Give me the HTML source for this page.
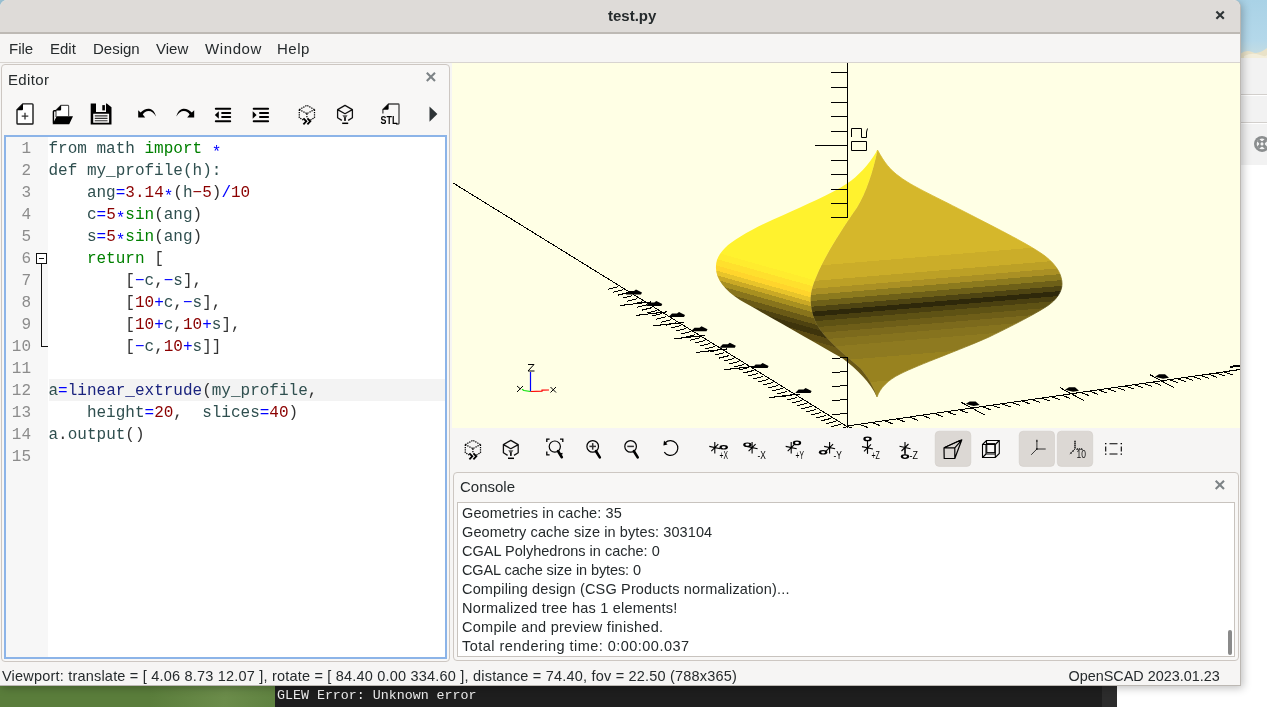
<!DOCTYPE html>
<html><head><meta charset="utf-8">
<style>
*{margin:0;padding:0;box-sizing:border-box}
html,body{width:1267px;height:707px;overflow:hidden;background:#fff;font-family:"Liberation Sans",sans-serif;position:relative}
body{will-change:transform}
.a{position:absolute}
.ui{font-family:"Liberation Sans",sans-serif;color:#252a2c;white-space:nowrap}
.mono{font-family:"Liberation Mono",monospace;white-space:pre}
#win{left:0;top:0;width:1241px;height:686px;background:#f6f5f4;border-right:1px solid #bcb8b3;border-bottom:1px solid #bcb8b3;border-radius:7px 7px 0 0;box-shadow:2px 2px 8px rgba(0,0,0,0.25)}
#title{left:0;top:0;width:1240px;height:34px;background:#dedbd8;border-bottom:2px solid #bdb9b4;border-radius:7px 7px 0 0}
#menu{left:0;top:34px;width:1240px;height:29px;background:#f6f5f4;border-bottom:1px solid #d8d4d0}
.menu{top:40px;font-size:15px}
#edock{left:1px;top:64px;width:449px;height:598px;border:1px solid #cdc7c2;border-radius:4px;background:#f8f7f6}
#editor{left:4px;top:135px;width:443px;height:524px;border:2px solid #8cb4e8;background:#fff}
#gutter{left:6px;top:137px;width:42px;height:520px;background:#f7f7f7}
.ln{left:6px;width:25px;text-align:right;color:#8a8a8a;font-size:15.83px;line-height:22px}
.cl{left:50px;font-size:15.83px;line-height:22px;color:#2f4f4f}
#view{left:452px;top:63px;width:788px;height:365px;background:#ffffe5}
#vtool{left:450px;top:428px;width:790px;height:44px;background:#f6f5f4}
#cdock{left:453px;top:472px;width:786px;height:189px;border:1px solid #cdc7c2;border-radius:4px;background:#f8f7f6}
#console{left:457px;top:502px;width:778px;height:155px;background:#fff;border:1px solid #c8c3be}
.cl2{left:462px;font-size:14.5px;line-height:19px;color:#252a2c}
#status{left:0;top:662px;width:1240px;height:23px;background:#f6f5f4}
i{font-style:normal}
.st{position:relative;top:4px}.g{color:#008000}.b{color:#0000ff}.r{color:#8b0000}.d{color:#333}.n{color:#1a237e}.k{color:#2f4f4f}
</style></head><body>
<!-- desktop background right / bottom -->
<div class="a" style="left:0;top:0;width:8px;height:8px;background:#9cc4d6"></div>
<div class="a" style="left:1230px;top:0;width:37px;height:58px;background:linear-gradient(#a9d2e6,#b4d8ea 70%,#c9dde0)"></div>
<svg class="a" style="left:1240px;top:40px" width="27" height="18"><path d="M0 14 Q6 9 12 12 T27 8 V18 H0Z" fill="#e9e2c8"/><path d="M4 16 Q12 12 20 15 T27 13 V18 H4Z" fill="#f3eedb"/></svg>
<div class="a" style="left:1240px;top:58px;width:27px;height:37px;background:#f2f2f2;border-bottom:1px solid #d2cfcc"></div>
<div class="a" style="left:1240px;top:96px;width:27px;height:27px;background:#f2f2f2;border-bottom:1px solid #d2cfcc"></div>
<div class="a" style="left:1240px;top:124px;width:27px;height:41px;background:#f2f2f2"></div>
<svg class="a" style="left:1240px;top:124px" width="27" height="41"><circle cx="22" cy="19.9" r="8" fill="#8a8d8e"/><circle cx="22" cy="19.9" r="5.3" fill="#f2f2f2"/><path d="M18.2 16.1L25.8 23.7M25.8 16.1L18.2 23.7" stroke="#8a8d8e" stroke-width="3.2"/><circle cx="22" cy="19.9" r="2.2" fill="#f2f2f2" stroke="#8a8d8e" stroke-width="1.3"/></svg>
<div class="a" style="left:0;top:686px;width:275px;height:21px;background:#5a7d3b"></div>
<div class="a" style="left:150px;top:686px;width:125px;height:21px;background:linear-gradient(100deg,#5a7d3b,#6b8c4a 60%,#5f8240)"></div>
<div class="a" style="left:275px;top:686px;width:827px;height:21px;background:#1e1e1e"></div>
<div class="a" style="left:1102px;top:686px;width:15px;height:21px;background:#2c2c2c"></div>
<div class="a mono" style="left:277px;top:687.5px;font-size:13.3px;color:#ececec">GLEW Error: Unknown error</div>
<div id="win" class="a"></div>
<div id="title" class="a"></div>
<div class="a ui" style="left:608px;top:7px;font-size:15px;font-weight:bold">test.py</div>
<div id="menu" class="a"></div>
<div class="a ui menu" style="left:9px">File</div>
<div class="a ui menu" style="left:50px">Edit</div>
<div class="a ui menu" style="left:93px">Design</div>
<div class="a ui menu" style="left:156px">View</div>
<div class="a ui menu" style="left:205px;letter-spacing:0.6px">Window</div>
<div class="a ui menu" style="left:277px;letter-spacing:0.5px">Help</div>

<div id="edock" class="a"></div>
<div class="a ui" style="left:8px;top:70.5px;font-size:15px;letter-spacing:0.35px">Editor</div>

<div id="editor" class="a"></div>
<div id="gutter" class="a"></div>
<div class="a" style="left:49px;top:379px;width:396px;height:22px;background:#f3f3f3"></div>
<div class="a mono" id="code" style="left:48.5px;top:137.5px;font-size:16px;line-height:22px;color:#2f4f4f"><i class="k">from</i> math <i class="g">import</i> <i class="b st">*</i>
def my_profile(h):
    ang<i class="b">=</i><i class="r">3.14</i><i class="b st">*</i><i class="d">(</i>h<i class="r">&#8722;5</i><i class="d">)</i><i class="b">/</i><i class="r">10</i>
    c<i class="b">=</i><i class="r">5</i><i class="b st">*</i><i class="g">sin</i><i class="d">(</i>ang<i class="d">)</i>
    s<i class="b">=</i><i class="r">5</i><i class="b st">*</i><i class="g">sin</i><i class="d">(</i>ang<i class="d">)</i>
    <i class="g">return</i> <i class="d">[</i>
        <i class="d">[</i><i class="b">&#8722;</i>c<i class="d">,</i><i class="b">&#8722;</i>s<i class="d">],</i>
        <i class="d">[</i><i class="r">10</i><i class="b">+</i>c<i class="d">,</i><i class="b">&#8722;</i>s<i class="d">],</i>
        <i class="d">[</i><i class="r">10</i><i class="b">+</i>c<i class="d">,</i><i class="r">10</i><i class="b">+</i>s<i class="d">],</i>
        <i class="d">[</i><i class="b">&#8722;</i>c<i class="d">,</i><i class="r">10</i><i class="b">+</i>s<i class="d">]]</i>

a<i class="b">=</i><i class="n">linear_extrude</i><i class="d">(</i>my_profile<i class="d">,</i>
    height<i class="b">=</i><i class="r">20</i><i class="d">,</i>  slices<i class="b">=</i><i class="r">40</i><i class="d">)</i>
a<i class="d">.</i>output<i class="d">()</i>
</div>
<div class="a mono" style="left:6px;top:137.5px;width:25px;text-align:right;font-size:16px;line-height:22px;color:#8c8c8c">1
2
3
4
5
6
7
8
9
10
11
12
13
14
15</div>
<div class="a" style="left:36px;top:253px;width:11px;height:11px;border:1px solid #111;background:#fff"></div>
<div class="a" style="left:39px;top:258px;width:5px;height:1px;background:#111"></div>
<div class="a" style="left:41px;top:264px;width:1px;height:83px;background:#111"></div>
<div class="a" style="left:41px;top:346px;width:7px;height:1px;background:#111"></div>

<div id="view" class="a"></div>
<!--VIEW--><svg class="a" style="left:0;top:0" width="1267" height="707" viewBox="0 0 1267 707"><defs>
<linearGradient id="gl" gradientUnits="userSpaceOnUse" x1="760" y1="200" x2="726" y2="320"><stop offset="0.000" stop-color="#fff22e"/><stop offset="0.500" stop-color="#fff22e"/><stop offset="0.500" stop-color="#ffec2e"/><stop offset="0.550" stop-color="#ffec2e"/><stop offset="0.550" stop-color="#ffe02d"/><stop offset="0.600" stop-color="#ffe02d"/><stop offset="0.600" stop-color="#ffd52c"/><stop offset="0.640" stop-color="#ffd52c"/><stop offset="0.640" stop-color="#e8c42a"/><stop offset="0.675" stop-color="#e8c42a"/><stop offset="0.675" stop-color="#caa925"/><stop offset="0.710" stop-color="#caa925"/><stop offset="0.710" stop-color="#a89020"/><stop offset="0.750" stop-color="#a89020"/><stop offset="0.750" stop-color="#88741c"/><stop offset="0.795" stop-color="#88741c"/><stop offset="0.795" stop-color="#6a5a16"/><stop offset="0.840" stop-color="#6a5a16"/><stop offset="0.840" stop-color="#4e4210"/><stop offset="0.875" stop-color="#4e4210"/><stop offset="0.875" stop-color="#3e340c"/><stop offset="0.920" stop-color="#3e340c"/><stop offset="0.920" stop-color="#5a4a12"/><stop offset="0.970" stop-color="#5a4a12"/><stop offset="0.970" stop-color="#6a5815"/></linearGradient>
<linearGradient id="gr" gradientUnits="userSpaceOnUse" x1="925" y1="160" x2="945" y2="400"><stop offset="0.000" stop-color="#d5b72b"/><stop offset="0.400" stop-color="#d5b72b"/><stop offset="0.400" stop-color="#cbad29"/><stop offset="0.462" stop-color="#cbad29"/><stop offset="0.462" stop-color="#bca026"/><stop offset="0.494" stop-color="#bca026"/><stop offset="0.494" stop-color="#aa9024"/><stop offset="0.519" stop-color="#aa9024"/><stop offset="0.519" stop-color="#8c7a1e"/><stop offset="0.544" stop-color="#8c7a1e"/><stop offset="0.544" stop-color="#6e6018"/><stop offset="0.568" stop-color="#6e6018"/><stop offset="0.568" stop-color="#4e4412"/><stop offset="0.589" stop-color="#4e4412"/><stop offset="0.589" stop-color="#2e280a"/><stop offset="0.609" stop-color="#2e280a"/><stop offset="0.609" stop-color="#4a4010"/><stop offset="0.629" stop-color="#4a4010"/><stop offset="0.629" stop-color="#5e5214"/><stop offset="0.654" stop-color="#5e5214"/><stop offset="0.654" stop-color="#6e5e18"/><stop offset="0.679" stop-color="#6e5e18"/><stop offset="0.679" stop-color="#7c6a1c"/><stop offset="0.707" stop-color="#7c6a1c"/><stop offset="0.707" stop-color="#86731e"/><stop offset="0.740" stop-color="#86731e"/><stop offset="0.740" stop-color="#8e7a20"/><stop offset="0.800" stop-color="#8e7a20"/><stop offset="0.800" stop-color="#98821f"/><stop offset="0.900" stop-color="#98821f"/><stop offset="0.900" stop-color="#a08a24"/></linearGradient>
<clipPath id="vc"><rect x="452" y="63" width="788" height="365"/></clipPath>
</defs>
<g clip-path="url(#vc)">
<path d="M877.5 150 C884 162 890 170 900 177 C912 186 930 194 965 212 C1000 230 1030 245 1045 256 C1058 266 1062 276 1062 284 C1062 292 1056 300 1048 305.5 C1040 311 1020 322 989 337 C960 350 920 364 900 374 C888 380 880 388 877 397 C873 385 866 374 860 368 C850 359 836 348 826 337 C816 326 811 314 810.5 300 C810.5 290 814 282 817 275 C825 256 840 232 857 207.5 C866 193 873 172 877.5 150 Z" fill="url(#gr)" stroke="url(#gr)" stroke-width="0.8"/>
<path d="M877.5 150 C868 166 858 176 847 183.6 C830 195 805 205 783.5 215 C760 225 735 238 725 248 C719 254 716 260 716 266 C715 278 724 290 740 300 C770 317 812 341 842 358 C858 370 870 382 877 397 C873 385 866 374 860 368 C850 359 836 348 826 337 C816 326 811 314 810.5 300 C810.5 290 814 282 817 275 C825 256 840 232 857 207.5 C866 193 873 172 877.5 150 Z" fill="url(#gl)"/>
<line x1="847.50" y1="63.00" x2="847.50" y2="218.00" stroke="#000" stroke-width="1" shape-rendering="crispEdges"/>
<line x1="831.00" y1="72.50" x2="847.50" y2="72.50" stroke="#000" stroke-width="1" shape-rendering="crispEdges"/>
<line x1="831.00" y1="87.50" x2="847.50" y2="87.50" stroke="#000" stroke-width="1" shape-rendering="crispEdges"/>
<line x1="831.00" y1="102.50" x2="847.50" y2="102.50" stroke="#000" stroke-width="1" shape-rendering="crispEdges"/>
<line x1="831.00" y1="116.50" x2="847.50" y2="116.50" stroke="#000" stroke-width="1" shape-rendering="crispEdges"/>
<line x1="831.00" y1="131.50" x2="847.50" y2="131.50" stroke="#000" stroke-width="1" shape-rendering="crispEdges"/>
<line x1="815.00" y1="145.50" x2="847.50" y2="145.50" stroke="#000" stroke-width="1" shape-rendering="crispEdges"/>
<line x1="831.00" y1="160.50" x2="847.50" y2="160.50" stroke="#000" stroke-width="1" shape-rendering="crispEdges"/>
<line x1="831.00" y1="174.50" x2="847.50" y2="174.50" stroke="#000" stroke-width="1" shape-rendering="crispEdges"/>
<line x1="831.00" y1="189.50" x2="847.50" y2="189.50" stroke="#000" stroke-width="1" shape-rendering="crispEdges"/>
<line x1="831.00" y1="203.50" x2="847.50" y2="203.50" stroke="#000" stroke-width="1" shape-rendering="crispEdges"/>
<line x1="831.00" y1="217.50" x2="847.50" y2="217.50" stroke="#000" stroke-width="1" shape-rendering="crispEdges"/>
<path d="M851.5 137V128.5H861.5V137.5H866.5V132L867.5 128.5M851.5 141.5H866.5V150.5H851.5Z" fill="none" stroke="#000" stroke-width="1"/>
<line x1="452.50" y1="182.60" x2="847.00" y2="426.50" stroke="#000" stroke-width="1" shape-rendering="crispEdges"/>
<line x1="608.00" y1="289.22" x2="618.00" y2="286.72" stroke="#000" stroke-width="1" shape-rendering="crispEdges"/>
<line x1="612.84" y1="292.21" x2="622.84" y2="289.71" stroke="#000" stroke-width="1" shape-rendering="crispEdges"/>
<line x1="617.68" y1="295.21" x2="627.68" y2="292.71" stroke="#000" stroke-width="1" shape-rendering="crispEdges"/>
<line x1="622.52" y1="298.20" x2="632.52" y2="295.70" stroke="#000" stroke-width="1" shape-rendering="crispEdges"/>
<line x1="627.36" y1="301.19" x2="637.36" y2="298.69" stroke="#000" stroke-width="1" shape-rendering="crispEdges"/>
<line x1="632.20" y1="304.18" x2="642.20" y2="301.68" stroke="#000" stroke-width="1" shape-rendering="crispEdges"/>
<line x1="637.04" y1="307.17" x2="647.04" y2="304.67" stroke="#000" stroke-width="1" shape-rendering="crispEdges"/>
<line x1="641.88" y1="310.17" x2="651.88" y2="307.67" stroke="#000" stroke-width="1" shape-rendering="crispEdges"/>
<line x1="646.72" y1="313.16" x2="656.72" y2="310.66" stroke="#000" stroke-width="1" shape-rendering="crispEdges"/>
<line x1="651.56" y1="316.15" x2="661.56" y2="313.65" stroke="#000" stroke-width="1" shape-rendering="crispEdges"/>
<line x1="656.40" y1="319.14" x2="666.40" y2="316.64" stroke="#000" stroke-width="1" shape-rendering="crispEdges"/>
<line x1="661.24" y1="322.14" x2="671.24" y2="319.64" stroke="#000" stroke-width="1" shape-rendering="crispEdges"/>
<line x1="666.08" y1="325.13" x2="676.08" y2="322.63" stroke="#000" stroke-width="1" shape-rendering="crispEdges"/>
<line x1="670.92" y1="328.12" x2="680.92" y2="325.62" stroke="#000" stroke-width="1" shape-rendering="crispEdges"/>
<line x1="675.76" y1="331.11" x2="685.76" y2="328.61" stroke="#000" stroke-width="1" shape-rendering="crispEdges"/>
<line x1="680.60" y1="334.11" x2="690.60" y2="331.61" stroke="#000" stroke-width="1" shape-rendering="crispEdges"/>
<line x1="685.44" y1="337.10" x2="695.44" y2="334.60" stroke="#000" stroke-width="1" shape-rendering="crispEdges"/>
<line x1="690.28" y1="340.09" x2="700.28" y2="337.59" stroke="#000" stroke-width="1" shape-rendering="crispEdges"/>
<line x1="695.12" y1="343.08" x2="705.12" y2="340.58" stroke="#000" stroke-width="1" shape-rendering="crispEdges"/>
<line x1="699.96" y1="346.07" x2="709.96" y2="343.57" stroke="#000" stroke-width="1" shape-rendering="crispEdges"/>
<line x1="704.80" y1="349.07" x2="714.80" y2="346.57" stroke="#000" stroke-width="1" shape-rendering="crispEdges"/>
<line x1="709.64" y1="352.06" x2="719.64" y2="349.56" stroke="#000" stroke-width="1" shape-rendering="crispEdges"/>
<line x1="714.48" y1="355.05" x2="724.48" y2="352.55" stroke="#000" stroke-width="1" shape-rendering="crispEdges"/>
<line x1="719.32" y1="358.04" x2="729.32" y2="355.54" stroke="#000" stroke-width="1" shape-rendering="crispEdges"/>
<line x1="724.16" y1="361.04" x2="734.16" y2="358.54" stroke="#000" stroke-width="1" shape-rendering="crispEdges"/>
<line x1="729.00" y1="364.03" x2="739.00" y2="361.53" stroke="#000" stroke-width="1" shape-rendering="crispEdges"/>
<line x1="733.84" y1="367.02" x2="743.84" y2="364.52" stroke="#000" stroke-width="1" shape-rendering="crispEdges"/>
<line x1="738.68" y1="370.01" x2="748.68" y2="367.51" stroke="#000" stroke-width="1" shape-rendering="crispEdges"/>
<line x1="743.52" y1="373.01" x2="753.52" y2="370.51" stroke="#000" stroke-width="1" shape-rendering="crispEdges"/>
<line x1="748.36" y1="376.00" x2="758.36" y2="373.50" stroke="#000" stroke-width="1" shape-rendering="crispEdges"/>
<line x1="753.20" y1="378.99" x2="763.20" y2="376.49" stroke="#000" stroke-width="1" shape-rendering="crispEdges"/>
<line x1="758.04" y1="381.98" x2="768.04" y2="379.48" stroke="#000" stroke-width="1" shape-rendering="crispEdges"/>
<line x1="762.88" y1="384.98" x2="772.88" y2="382.48" stroke="#000" stroke-width="1" shape-rendering="crispEdges"/>
<line x1="767.72" y1="387.97" x2="777.72" y2="385.47" stroke="#000" stroke-width="1" shape-rendering="crispEdges"/>
<line x1="772.56" y1="390.96" x2="782.56" y2="388.46" stroke="#000" stroke-width="1" shape-rendering="crispEdges"/>
<line x1="777.40" y1="393.95" x2="787.40" y2="391.45" stroke="#000" stroke-width="1" shape-rendering="crispEdges"/>
<line x1="782.24" y1="396.94" x2="792.24" y2="394.44" stroke="#000" stroke-width="1" shape-rendering="crispEdges"/>
<line x1="787.08" y1="399.94" x2="797.08" y2="397.44" stroke="#000" stroke-width="1" shape-rendering="crispEdges"/>
<line x1="791.92" y1="402.93" x2="801.92" y2="400.43" stroke="#000" stroke-width="1" shape-rendering="crispEdges"/>
<line x1="796.76" y1="405.92" x2="806.76" y2="403.42" stroke="#000" stroke-width="1" shape-rendering="crispEdges"/>
<line x1="801.60" y1="408.91" x2="811.60" y2="406.41" stroke="#000" stroke-width="1" shape-rendering="crispEdges"/>
<line x1="806.44" y1="411.91" x2="816.44" y2="409.41" stroke="#000" stroke-width="1" shape-rendering="crispEdges"/>
<line x1="811.28" y1="414.90" x2="821.28" y2="412.40" stroke="#000" stroke-width="1" shape-rendering="crispEdges"/>
<line x1="816.12" y1="417.89" x2="826.12" y2="415.39" stroke="#000" stroke-width="1" shape-rendering="crispEdges"/>
<line x1="820.96" y1="420.88" x2="830.96" y2="418.38" stroke="#000" stroke-width="1" shape-rendering="crispEdges"/>
<line x1="825.80" y1="423.88" x2="835.80" y2="421.38" stroke="#000" stroke-width="1" shape-rendering="crispEdges"/>
<line x1="830.64" y1="426.87" x2="840.64" y2="424.37" stroke="#000" stroke-width="1" shape-rendering="crispEdges"/>
<line x1="835.48" y1="429.86" x2="845.48" y2="427.36" stroke="#000" stroke-width="1" shape-rendering="crispEdges"/>
<line x1="620.00" y1="305.47" x2="651.00" y2="301.97" stroke="#000" stroke-width="1.1" shape-rendering="crispEdges"/>
<line x1="636.00" y1="315.36" x2="667.00" y2="311.86" stroke="#000" stroke-width="1.1" shape-rendering="crispEdges"/>
<line x1="653.00" y1="325.87" x2="684.00" y2="322.37" stroke="#000" stroke-width="1.1" shape-rendering="crispEdges"/>
<line x1="674.00" y1="338.85" x2="705.00" y2="335.35" stroke="#000" stroke-width="1.1" shape-rendering="crispEdges"/>
<line x1="696.00" y1="352.46" x2="727.00" y2="348.96" stroke="#000" stroke-width="1.1" shape-rendering="crispEdges"/>
<line x1="724.00" y1="369.77" x2="755.00" y2="366.27" stroke="#000" stroke-width="1.1" shape-rendering="crispEdges"/>
<line x1="769.00" y1="397.59" x2="800.00" y2="394.09" stroke="#000" stroke-width="1.1" shape-rendering="crispEdges"/>
<path d="M626 294.1 l3 -3 h5 l2 -1.5 l6 3 l-1 2 h-15 z" fill="#000"/>
<path d="M646.3 305.5 l3 -3 h5 l2 -1.5 l6 3 l-1 2 h-15 z" fill="#000"/>
<path d="M669 316.5 l3 -3 h5 l2 -1.5 l6 3 l-1 2 h-15 z" fill="#000"/>
<path d="M691.5 330.8 l3 -3 h5 l2 -1.5 l6 3 l-1 2 h-15 z" fill="#000"/>
<path d="M719.8 347.3 l3 -3 h5 l2 -1.5 l6 3 l-1 2 h-15 z" fill="#000"/>
<path d="M752.6 367.5 l3 -3 h5 l2 -1.5 l6 3 l-1 2 h-15 z" fill="#000"/>
<path d="M795.6 392.5 l3 -3 h5 l2 -1.5 l6 3 l-1 2 h-15 z" fill="#000"/>
<line x1="847.50" y1="357.00" x2="847.50" y2="428.00" stroke="#000" stroke-width="1" shape-rendering="crispEdges"/>
<line x1="832.00" y1="358.50" x2="847.50" y2="357.50" stroke="#000" stroke-width="1" shape-rendering="crispEdges"/>
<line x1="832.00" y1="372.50" x2="847.50" y2="371.50" stroke="#000" stroke-width="1" shape-rendering="crispEdges"/>
<line x1="832.00" y1="386.50" x2="847.50" y2="385.50" stroke="#000" stroke-width="1" shape-rendering="crispEdges"/>
<line x1="832.00" y1="400.50" x2="847.50" y2="399.50" stroke="#000" stroke-width="1" shape-rendering="crispEdges"/>
<line x1="832.00" y1="414.50" x2="847.50" y2="413.50" stroke="#000" stroke-width="1" shape-rendering="crispEdges"/>
<line x1="847.00" y1="426.00" x2="1240.00" y2="369.50" stroke="#000" stroke-width="1" shape-rendering="crispEdges"/>
<line x1="846.00" y1="426.00" x2="855.00" y2="429.20" stroke="#000" stroke-width="1" shape-rendering="crispEdges"/>
<line x1="858.56" y1="424.19" x2="867.56" y2="427.39" stroke="#000" stroke-width="1" shape-rendering="crispEdges"/>
<line x1="871.12" y1="422.39" x2="880.12" y2="425.59" stroke="#000" stroke-width="1" shape-rendering="crispEdges"/>
<line x1="883.68" y1="420.58" x2="892.68" y2="423.78" stroke="#000" stroke-width="1" shape-rendering="crispEdges"/>
<line x1="896.24" y1="418.78" x2="905.24" y2="421.98" stroke="#000" stroke-width="1" shape-rendering="crispEdges"/>
<line x1="908.80" y1="416.97" x2="917.80" y2="420.17" stroke="#000" stroke-width="1" shape-rendering="crispEdges"/>
<line x1="921.36" y1="415.17" x2="930.36" y2="418.37" stroke="#000" stroke-width="1" shape-rendering="crispEdges"/>
<line x1="933.92" y1="413.36" x2="942.92" y2="416.56" stroke="#000" stroke-width="1" shape-rendering="crispEdges"/>
<line x1="946.48" y1="411.55" x2="955.48" y2="414.75" stroke="#000" stroke-width="1" shape-rendering="crispEdges"/>
<line x1="959.04" y1="409.75" x2="968.04" y2="412.95" stroke="#000" stroke-width="1" shape-rendering="crispEdges"/>
<line x1="960.60" y1="401.94" x2="984.60" y2="414.94" stroke="#000" stroke-width="1" shape-rendering="crispEdges"/>
<line x1="981.54" y1="406.51" x2="990.54" y2="409.71" stroke="#000" stroke-width="1" shape-rendering="crispEdges"/>
<line x1="991.48" y1="405.08" x2="1000.48" y2="408.28" stroke="#000" stroke-width="1" shape-rendering="crispEdges"/>
<line x1="1001.42" y1="403.66" x2="1010.42" y2="406.86" stroke="#000" stroke-width="1" shape-rendering="crispEdges"/>
<line x1="1011.36" y1="402.23" x2="1020.36" y2="405.43" stroke="#000" stroke-width="1" shape-rendering="crispEdges"/>
<line x1="1021.30" y1="400.80" x2="1030.30" y2="404.00" stroke="#000" stroke-width="1" shape-rendering="crispEdges"/>
<line x1="1031.24" y1="399.37" x2="1040.24" y2="402.57" stroke="#000" stroke-width="1" shape-rendering="crispEdges"/>
<line x1="1041.18" y1="397.94" x2="1050.18" y2="401.14" stroke="#000" stroke-width="1" shape-rendering="crispEdges"/>
<line x1="1051.12" y1="396.51" x2="1060.12" y2="399.71" stroke="#000" stroke-width="1" shape-rendering="crispEdges"/>
<line x1="1061.06" y1="395.08" x2="1070.06" y2="398.28" stroke="#000" stroke-width="1" shape-rendering="crispEdges"/>
<line x1="1060.00" y1="387.65" x2="1084.00" y2="400.65" stroke="#000" stroke-width="1" shape-rendering="crispEdges"/>
<line x1="1080.00" y1="392.36" x2="1089.00" y2="395.56" stroke="#000" stroke-width="1" shape-rendering="crispEdges"/>
<line x1="1089.00" y1="391.06" x2="1098.00" y2="394.26" stroke="#000" stroke-width="1" shape-rendering="crispEdges"/>
<line x1="1098.00" y1="389.77" x2="1107.00" y2="392.97" stroke="#000" stroke-width="1" shape-rendering="crispEdges"/>
<line x1="1107.00" y1="388.48" x2="1116.00" y2="391.68" stroke="#000" stroke-width="1" shape-rendering="crispEdges"/>
<line x1="1116.00" y1="387.18" x2="1125.00" y2="390.38" stroke="#000" stroke-width="1" shape-rendering="crispEdges"/>
<line x1="1125.00" y1="385.89" x2="1134.00" y2="389.09" stroke="#000" stroke-width="1" shape-rendering="crispEdges"/>
<line x1="1134.00" y1="384.60" x2="1143.00" y2="387.80" stroke="#000" stroke-width="1" shape-rendering="crispEdges"/>
<line x1="1143.00" y1="383.30" x2="1152.00" y2="386.50" stroke="#000" stroke-width="1" shape-rendering="crispEdges"/>
<line x1="1152.00" y1="382.01" x2="1161.00" y2="385.21" stroke="#000" stroke-width="1" shape-rendering="crispEdges"/>
<line x1="1150.00" y1="374.71" x2="1174.00" y2="387.71" stroke="#000" stroke-width="1" shape-rendering="crispEdges"/>
<line x1="1168.80" y1="379.59" x2="1177.80" y2="382.79" stroke="#000" stroke-width="1" shape-rendering="crispEdges"/>
<line x1="1176.60" y1="378.47" x2="1185.60" y2="381.67" stroke="#000" stroke-width="1" shape-rendering="crispEdges"/>
<line x1="1184.40" y1="377.35" x2="1193.40" y2="380.55" stroke="#000" stroke-width="1" shape-rendering="crispEdges"/>
<line x1="1192.20" y1="376.23" x2="1201.20" y2="379.43" stroke="#000" stroke-width="1" shape-rendering="crispEdges"/>
<line x1="1200.00" y1="375.11" x2="1209.00" y2="378.31" stroke="#000" stroke-width="1" shape-rendering="crispEdges"/>
<line x1="1207.80" y1="373.99" x2="1216.80" y2="377.19" stroke="#000" stroke-width="1" shape-rendering="crispEdges"/>
<line x1="1215.60" y1="372.86" x2="1224.60" y2="376.06" stroke="#000" stroke-width="1" shape-rendering="crispEdges"/>
<line x1="1223.40" y1="371.74" x2="1232.40" y2="374.94" stroke="#000" stroke-width="1" shape-rendering="crispEdges"/>
<path d="M965.6 403.94300254452924 l4 -2.5 h6 l4 3.5 l-6 1 z" fill="#000"/>
<path d="M1065 389.6526717557252 l4 -2.5 h6 l4 3.5 l-6 1 z" fill="#000"/>
<path d="M1155 376.71374045801525 l4 -2.5 h6 l4 3.5 l-6 1 z" fill="#000"/>
<line x1="1230.00" y1="367.00" x2="1240.00" y2="365.50" stroke="#000" stroke-width="2" shape-rendering="crispEdges"/>
<line x1="530.5" y1="391.5" x2="530.5" y2="372" stroke="#0000ff" stroke-width="1.2"/>
<polyline points="530.5,391.5 542,391.2 542,390.2 549,390" fill="none" stroke="#ff0000" stroke-width="1.2"/>
<polyline points="530.5,391.5 524,390.5 522,389.3" fill="none" stroke="#00e000" stroke-width="1.2"/>
<path d="M528 364.5h6l-6 6.5h6.5" fill="none" stroke="#000" stroke-width="1"/>
<path d="M550.5 387l5.5 5.5M556 387l-5.5 5.5" fill="none" stroke="#000" stroke-width="1"/>
<path d="M517 386l3.5 3M523 386l-6 6" fill="none" stroke="#000" stroke-width="1"/></g></svg><!--/VIEW-->
<div id="vtool" class="a"></div>
<div id="cdock" class="a"></div>
<div class="a ui" style="left:460px;top:478px;font-size:15px">Console</div>
<div id="console" class="a"></div>
<div class="a ui cl2" style="top:503.5px;letter-spacing:0.12px">Geometries in cache: 35</div>
<div class="a ui cl2" style="top:522.5px;letter-spacing:0.1px">Geometry cache size in bytes: 303104</div>
<div class="a ui cl2" style="top:541.5px;letter-spacing:0px">CGAL Polyhedrons in cache: 0</div>
<div class="a ui cl2" style="top:560.5px;letter-spacing:-0.1px">CGAL cache size in bytes: 0</div>
<div class="a ui cl2" style="top:579.5px;letter-spacing:0.16px">Compiling design (CSG Products normalization)...</div>
<div class="a ui cl2" style="top:598.5px;letter-spacing:0.22px">Normalized tree has 1 elements!</div>
<div class="a ui cl2" style="top:617.5px;letter-spacing:0.27px">Compile and preview finished.</div>
<div class="a ui cl2" style="top:636.5px;letter-spacing:0.47px">Total rendering time: 0:00:00.037</div>
<div class="a" style="left:1228px;top:630px;width:4px;height:25px;border-radius:2px;background:#8a8a8a"></div>

<div id="status" class="a"></div>
<div class="a ui" style="left:2px;top:668px;font-size:14.5px;letter-spacing:0.2px">Viewport: translate = [ 4.06 8.73 12.07 ], rotate = [ 84.40 0.00 334.60 ], distance = 74.40, fov = 22.50 (788x365)</div>
<div class="a ui" style="left:1068.5px;top:668px;font-size:14.4px">OpenSCAD 2023.01.23</div>
<!--TOOLS--><svg class="a" style="left:0;top:0" width="1267" height="707" viewBox="0 0 1267 707"><path d="M22.8 103.9H32.2a0.8 0.8 0 0 1 0.8 0.8V123.2a0.8 0.8 0 0 1 -0.8 0.8H17.8a0.8 0.8 0 0 1 -0.8 -0.8V109.9Z" fill="#fff" stroke="#1a1a1a" stroke-width="1.4"/>
<path d="M17 110.2L23 104V109.2a1 1 0 0 1 -1 1Z" fill="#000"/>
<path d="M25 112.8V119.4M21.7 116.1H28.3" stroke="#333" stroke-width="1.3"/>
<path d="M56 117V110.3L61 105.3H67.8a0.8 0.8 0 0 1 0.8 0.8V116" fill="#fff" stroke="#555" stroke-width="1.2"/>
<path d="M55.6 110.6L61.1 105.1V109.6a1 1 0 0 1 -1 1Z" fill="#000"/>
<path d="M53.4 123.5V111.6a0.8 0.8 0 0 1 0.8 -0.8H56" fill="none" stroke="#000" stroke-width="1.4"/>
<path d="M56.6 116.2H73L69.2 124.2H52.6Z" fill="#000"/>
<path d="M90.7 103.4H96V111.9H106V103.4H106.8L111.5 107.2V124.4H90.7ZM93.2 113.8V122.7H109.1V113.8Z" fill="#000" fill-rule="evenodd"/>
<rect x="102.3" y="105.1" width="2.6" height="5.3" fill="#000"/>
<path d="M94.8 115.9H107.5M94.8 118.4H107.5M94.8 120.8H107.5" stroke="#333" stroke-width="1.1"/>
<path d="M138.2 110.2L140.6 112.6C143 110 146 108.6 149 108.8C152.5 109.2 155 112 156 116.6C154.2 113 151.5 111 148.5 111C146 111 144 112.3 142.8 114.4L145.2 117.5H138.2Z" fill="#000"/>
<path d="M138.2 110.2L140.6 112.6C143 110 146 108.6 149 108.8C152.5 109.2 155 112 156 116.6C154.2 113 151.5 111 148.5 111C146 111 144 112.3 142.8 114.4L145.2 117.5H138.2Z" fill="#000" transform="matrix(-1 0 0 1 332.4 0)"/>
<g transform="translate(0 0)" stroke="#000" stroke-width="2" stroke-linecap="round"><path d="M215.8 108.7H230.2M222.1 112.9H230.2M222.1 117H230.2M215.8 121.2H230.2"/></g>
<g transform="translate(37.9 0)" stroke="#000" stroke-width="2" stroke-linecap="round"><path d="M215.8 108.7H230.2M222.1 112.9H230.2M222.1 117H230.2M215.8 121.2H230.2"/></g>
<path d="M214.8 114.9L218.8 111.3V118.7Z" fill="#000"/>
<path d="M252.7 111.3L256.6 114.9L252.7 118.7Z" fill="#000"/>
<path d="M299.3 109.6L306.9 105.3L314.5 109.6M299.3 109.6L306.9 113.6L314.5 109.6M306.9 113.6V117.6M299.3 109.6V117.7L303.3 120.0M314.5 109.6V117.7L310.5 120.0" fill="none" stroke="#000" stroke-width="1.25" stroke-dasharray="1.3 1"/>
<path d="M303.4 118.4l2.9 2.9l-2.9 3.1M307.4 118.4l2.9 2.9l-2.9 3.1" fill="none" stroke="#000" stroke-width="1.8"/>
<path d="M337.6 109.6L345.0 105.4L352.4 109.6L345.0 113.7Z M337.6 109.6V117.7L341.8 120.4M352.4 109.6V117.7L348.2 120.4" fill="none" stroke="#111" stroke-width="1.3" stroke-linejoin="round"/>
<path d="M342.4 115.2H347.6L345.7 118.2V121.0H344.3V118.2Z" fill="#555"/>
<path d="M344.2 117.6H345.8V120.8H344.2Z" fill="#111"/>
<path d="M342.2 123.3H348.2" stroke="#000" stroke-width="1.5"/>
<path d="M465.3 444.6L472.9 440.3L480.5 444.6M465.3 444.6L472.9 448.6L480.5 444.6M472.9 448.6V452.6M465.3 444.6V452.7L469.3 455.0M480.5 444.6V452.7L476.5 455.0" fill="none" stroke="#000" stroke-width="1.25" stroke-dasharray="1.3 1"/>
<path d="M469.4 453.4l2.9 2.9l-2.9 3.1M473.4 453.4l2.9 2.9l-2.9 3.1" fill="none" stroke="#000" stroke-width="1.8"/>
<path d="M503.4 444.6L510.8 440.4L518.2 444.6L510.8 448.7Z M503.4 444.6V452.7L507.6 455.4M518.2 444.6V452.7L514.0 455.4" fill="none" stroke="#111" stroke-width="1.3" stroke-linejoin="round"/>
<path d="M508.2 450.2H513.4L511.5 453.2V456.0H510.1V453.2Z" fill="#555"/>
<path d="M510.0 452.6H511.6V455.8H510.0Z" fill="#111"/>
<path d="M508.0 458.3H514.0" stroke="#000" stroke-width="1.5"/>
<path d="M382.9 113.6V109.6L388.6 104H398.2a0.8 0.8 0 0 1 0.8 0.8V123.2a0.8 0.8 0 0 1 -0.8 0.8H396" fill="none" stroke="#444" stroke-width="1.3"/>
<path d="M382.6 109.8L388.6 103.8V108.8a1 1 0 0 1 -1 1Z" fill="#000"/>
<text x="380.6" y="124.2" font-family="Liberation Sans" font-weight="bold" font-size="10.6" fill="#000" textLength="16.8" lengthAdjust="spacingAndGlyphs">STL</text>
<path d="M429.5 106.6V121.7L437.4 114.1Z" fill="#2e3436"/>
<path d="M546.8 442V439.2H549.6M560 439.2H562.8V442M546.8 451.5V454.8H549.6" fill="none" stroke="#000" stroke-width="1.3"/>
<circle cx="554.8" cy="446.6" r="5.6" fill="none" stroke="#000" stroke-width="1.2"/>
<path d="M558 451l3.8 6.2" stroke="#000" stroke-width="2.6" stroke-linecap="round"/>
<path d="M559 454.5l3.5 -1" stroke="#000" stroke-width="1.4"/>
<circle cx="592.7" cy="446.4" r="5.8" fill="none" stroke="#000" stroke-width="1.2"/>
<path d="M596.0 451.2l3.8 6.2" stroke="#000" stroke-width="2.6" stroke-linecap="round"/>
<path d="M589.4000000000001 446.4H596.0" stroke="#333" stroke-width="1.5"/>
<path d="M592.7 443.1V449.7" stroke="#333" stroke-width="1.5"/>
<circle cx="630.6" cy="446.4" r="5.8" fill="none" stroke="#000" stroke-width="1.2"/>
<path d="M633.9 451.2l3.8 6.2" stroke="#000" stroke-width="2.6" stroke-linecap="round"/>
<path d="M627.3000000000001 446.4H633.9" stroke="#333" stroke-width="1.5"/>
<path d="M665.2 442.8A7.4 7.4 0 1 1 664.3 452.2" fill="none" stroke="#000" stroke-width="1.2"/>
<path d="M664 440.6L667.5 444.4L663.4 445.5Z" fill="#000"/>
<path d="M714.8 442.1V453.6M709.3 446.40000000000003L720.3 448.8M711.3 451.1L718.3 444.1" stroke="#000" stroke-width="1.1"/>
<ellipse cx="723.7" cy="447.3" rx="4.2" ry="2.3" fill="#000"/>
<ellipse cx="723.7" cy="447.3" rx="2" ry="1.1" fill="#fff"/>
<text x="719.5" y="458.8" font-family="Liberation Sans" font-size="11" fill="#000" textLength="8.4" lengthAdjust="spacingAndGlyphs">+X</text>
<path d="M752.1 442.1V453.6M746.6 446.40000000000003L757.6 448.8M748.6 451.1L755.6 444.1" stroke="#000" stroke-width="1.1"/>
<ellipse cx="747.4" cy="444.7" rx="4.2" ry="2.3" fill="#000"/>
<ellipse cx="747.4" cy="444.7" rx="2" ry="1.1" fill="#fff"/>
<text x="757.5" y="458.8" font-family="Liberation Sans" font-size="11" fill="#000" textLength="8.4" lengthAdjust="spacingAndGlyphs">-X</text>
<path d="M791.2 442.1V453.6M785.7 446.40000000000003L796.7 448.8M787.7 451.1L794.7 444.1" stroke="#000" stroke-width="1.1"/>
<ellipse cx="797" cy="442.9" rx="4.2" ry="2.3" fill="#000"/>
<ellipse cx="797" cy="442.9" rx="2" ry="1.1" fill="#fff"/>
<text x="795.5" y="458.8" font-family="Liberation Sans" font-size="11" fill="#000" textLength="8.4" lengthAdjust="spacingAndGlyphs">+Y</text>
<path d="M829.6 442.1V453.6M824.1 446.40000000000003L835.1 448.8M826.1 451.1L833.1 444.1" stroke="#000" stroke-width="1.1"/>
<ellipse cx="823.1" cy="452.3" rx="4.2" ry="2.3" fill="#000"/>
<ellipse cx="823.1" cy="452.3" rx="2" ry="1.1" fill="#fff"/>
<text x="833.5" y="458.8" font-family="Liberation Sans" font-size="11" fill="#000" textLength="8.4" lengthAdjust="spacingAndGlyphs">-Y</text>
<ellipse cx="867.5" cy="438.9" rx="4.2" ry="2.3" fill="#000"/>
<ellipse cx="867.5" cy="438.9" rx="2" ry="1.1" fill="#fff"/>
<path d="M867.5 441V453.5" stroke="#000" stroke-width="1.1"/>
<path d="M867.5 442.3V453.8M862.0 446.6L873.0 449.0M864.0 451.3L871.0 444.3" stroke="#000" stroke-width="1.1"/>
<text x="871.5" y="458.8" font-family="Liberation Sans" font-size="11" fill="#000" textLength="8.4" lengthAdjust="spacingAndGlyphs">+Z</text>
<path d="M905 442.0V453.5M899.5 446.3L910.5 448.7M901.5 451.0L908.5 444.0" stroke="#000" stroke-width="1.1"/>
<path d="M905 447.5V455" stroke="#000" stroke-width="1.1"/>
<ellipse cx="905" cy="456.6" rx="4.2" ry="2.3" fill="#000"/>
<ellipse cx="905" cy="456.6" rx="2" ry="1.1" fill="#fff"/>
<text x="909.5" y="458.8" font-family="Liberation Sans" font-size="11" fill="#000" textLength="8.4" lengthAdjust="spacingAndGlyphs">-Z</text>
<rect x="935.2" y="431.2" width="35.6" height="35.2" rx="4" fill="#dcd8d4" stroke="#d2cdc8" stroke-width="0.6"/>
<rect x="1019.2" y="431.2" width="35.3" height="35.2" rx="4" fill="#dcd8d4" stroke="#d2cdc8" stroke-width="0.6"/>
<rect x="1057.3" y="431.2" width="35.4" height="35.2" rx="4" fill="#dcd8d4" stroke="#d2cdc8" stroke-width="0.6"/>
<path d="M944 447.8L961.8 439.8L954.8 458.5H944.2Z M944 447.8H954.8V458.5 M954.8 447.8L961.8 439.8" fill="none" stroke="#000" stroke-width="1.2" stroke-linejoin="round"/>
<path d="M944.2 447.6L960 440.3" stroke="#000" stroke-width="1"/>
<path d="M982.5 444.5L986.5 440.5H999.3V453.5L995.3 457.5H982.5Z M982.5 444.5H995.3V457.5 M995.3 444.5L999.3 440.5 M986 444.5V454H995.3 M986 454L982.5 457.5 M986.5 440.5V444.5" fill="none" stroke="#000" stroke-width="1.1"/>
<rect x="986.8" y="443.6" width="8" height="9" fill="none" stroke="#000" stroke-width="1"/>
<path d="M1036.9 440.5V449H1045.7M1036.9 449L1031.2 454.8" fill="none" stroke="#222" stroke-width="0.9"/>
<path d="M1036.4 440.7h1M1036.4 449h1" stroke="#000" stroke-width="2"/>
<path d="M1075 440.5V449M1075 449L1069.8 454" fill="none" stroke="#222" stroke-width="0.9"/>
<path d="M1074.2 441.5h1.6M1074.2 443.5h1.6M1074.2 445.5h1.6M1074.2 447.5h1.6M1077.5 449.5v-1.4M1079.5 449.5v-1.4M1081.5 449.5v-1.4M1076 449.3H1083M1070.5 452.5l1.2 1.2M1072.5 450.5l1.2 1.2" stroke="#222" stroke-width="0.8"/>
<text x="1076.5" y="458" font-family="Liberation Sans" font-size="11" fill="#111" textLength="9.5" lengthAdjust="spacingAndGlyphs">10</text>
<path d="M1109.5 443.8H1117.5M1109.5 454H1117.5M1105.7 446.5V451.5M1121.3 446.5V451.5" fill="none" stroke="#000" stroke-width="1.1"/>
<path d="M1105 443h1.4v1.2h-1.4zM1120.6 443h1.4v1.2h-1.4zM1105 453.6h1.4v1.2h-1.4zM1120.6 453.6h1.4v1.2h-1.4z" fill="#000"/>
<path d="M426.8 72.8L435 81M435 72.8L426.8 81" stroke="#7d8386" stroke-width="2.1"/>
<path d="M1215.7 480.7L1224 489M1224 480.7L1215.7 489" stroke="#7d8386" stroke-width="2.1"/>
<path d="M1216.4 11.4L1223.8 18.8M1223.8 11.4L1216.4 18.8" stroke="#2e3436" stroke-width="2.1"/></svg><!--/TOOLS-->
</body></html>
